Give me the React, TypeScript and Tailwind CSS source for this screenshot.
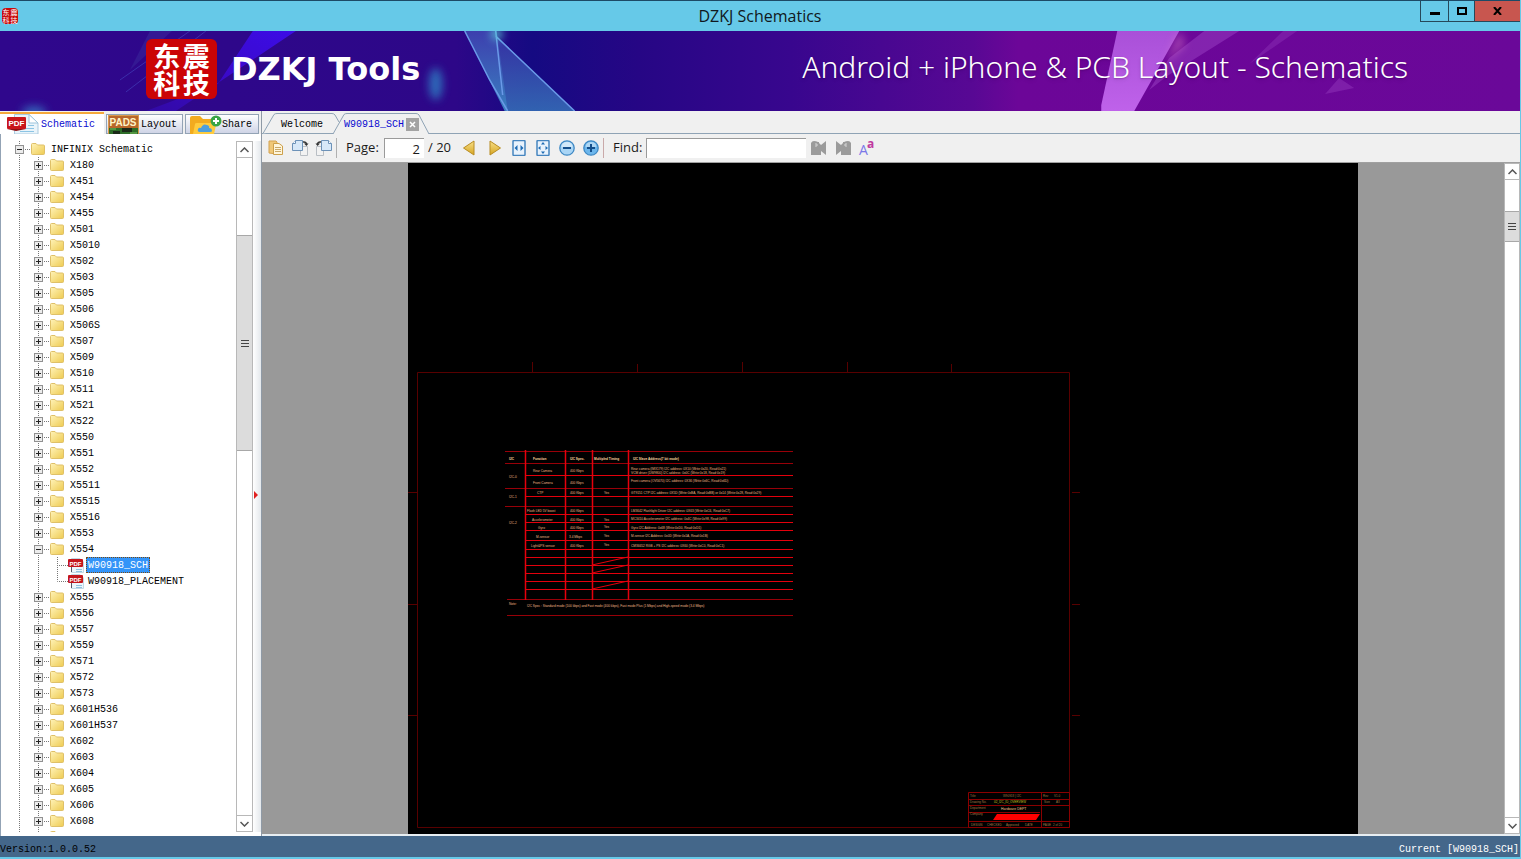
import React, { useState } from "react";
import clsx from "clsx";

const MODELS = [
  "X180", "X451", "X454", "X455", "X501", "X5010", "X502", "X503", "X505",
  "X506", "X506S", "X507", "X509", "X510", "X511", "X521", "X522", "X550",
  "X551", "X552", "X5511", "X5515", "X5516", "X553", "X554", "X555", "X556",
  "X557", "X559", "X571", "X572", "X573", "X601H536", "X601H537", "X602",
  "X603", "X604", "X605", "X606", "X608", "X609",
];

const FILES: Record<string, string[]> = {
  X554: ["W90918_SCH", "W90918_PLACEMENT"],
};

const MONO = "font-['Liberation_Mono','Noto_Sans_CJK_SC',monospace] text-[10px]";

/* ---------- icons ---------- */

const FolderIcon = () => (
  <svg width="14" height="12" viewBox="0 0 14 12" className="shrink-0">
    <defs>
      <linearGradient id="folder" x1="0" y1="0" x2="1" y2="1">
        <stop offset="0" stopColor="#fff3b8" />
        <stop offset="1" stopColor="#eecb52" />
      </linearGradient>
    </defs>
    <path d="M.5 10.5V1.5Q.5.5 1.5.5H5L6.5 2H12.500Q13.500 2 13.500 3V10.500Q13.500 11.500 12.500 11.500H1.500Q.5 11.500.5 10.500Z" fill="url(#folder)" stroke="#dfc068" />
  </svg>
);

const PdfIcon = () => (
  <svg width="16" height="16" viewBox="0 0 16 16" className="shrink-0">
    <path d="M3.500 1.500H12L15.500 5V15.500H3.500Z" fill="#edf6fb" stroke="#c3d9e6" />
    <path d="M8 12.500H14M8 14.500H14" stroke="#8fc3e0" />
    <path d="M3.500 10V15" stroke="#556" />
    <rect x="0" y="2" width="15" height="8" rx="1" fill="#c4161c" />
    <text x="1.500" y="8.500" fontSize="6" fontWeight="bold" fill="#fff" fontFamily="Liberation Sans, sans-serif">PDF</text>
  </svg>
);

const PdfTabIcon = () => (
  <svg width="32" height="20" viewBox="0 0 32 20" className="shrink-0">
    <path d="M7.500 20V.5H22L31 9V20Z" fill="#e9f4fa" stroke="#a9cbe0" />
    <path d="M22 .5V9H31Z" fill="#fff" stroke="#9cc4dc" />
    <path d="M13 14.500H27M13 17.500H27M21 11.500H27" stroke="#8cc4e4" />
    <rect x="0" y="3" width="19" height="12" rx="1" fill="#c9151b" />
    <path d="M0 15H19L9 17Z" fill="#8d0f12" />
    <text x="1.500" y="12" fontSize="8" fontWeight="bold" fill="#fff" fontFamily="Liberation Sans, sans-serif">PDF</text>
  </svg>
);

const PadsIcon = () => (
  <svg width="31" height="19" viewBox="0 0 31 19" className="shrink-0">
    <rect width="31" height="19" fill="#b8662a" />
    <path d="M0 13H31V19H0Z" fill="#2d6d28" />
    <path d="M5 16H12V19H5ZM14 13H24V17H14Z" fill="#1b2a18" />
    <path d="M2 14H8M22 18H29" stroke="#7cc05c" />
    <rect x=".5" y=".5" width="30" height="19" fill="none" stroke="#d99a4a" />
    <text x="1.500" y="11" fontSize="10" fontWeight="bold" fill="#fff4c8" fontFamily="Liberation Sans, sans-serif">PADS</text>
  </svg>
);

const ShareIcon = () => (
  <svg width="32" height="19" viewBox="0 0 32 19" className="shrink-0">
    <path d="M0 19V3Q0 1 2 1H10L13 4H22Q24 4 24 6V19Z" fill="#f2ab1f" />
    <path d="M3 19L5 9Q5 8 7 8H25Q27 8 26 10L24 19Z" fill="#ffcb3d" />
    <path d="M10 17Q7 17 8 14Q9 12 11 13Q13 8 17 10Q20 11 19 13Q22 13 22 16Q22 17 20 17Z" fill="#4f9fdc" />
    <circle cx="26" cy="6" r="5.500" fill="#3aa545" />
    <path d="M26 3V9M23 6H29" stroke="#fff" strokeWidth="2" />
  </svg>
);

const CopyPageIcon = () => (
  <svg width="16" height="16" viewBox="0 0 16 16">
    <path d="M1 1H8L9 2V14L1 13Z" fill="#f0c878" stroke="#d3a250" />
    <path d="M5.500 3.500H11L14.500 6V14.500H5.500Z" fill="#fff6dc" stroke="#cda04b" />
    <path d="M7 7.500H13M7 9.500H13M7 11.500H13" stroke="#c9a96a" />
  </svg>
);

const RotateIcon = ({ left }: { left?: boolean }) => (
  <svg width="18" height="16" viewBox="0 0 18 16">
    <g transform={left ? "translate(18 0) scale(-1 1)" : undefined}>
      <path d="M9.500 6.500H16.500V15.500H9.500Z" fill="#f2f2f2" stroke="#b9bec4" />
      <path d="M4.500.5H11.500V10.500H1.500V3.500Z" fill="#d7e8f8" stroke="#6d92b8" />
      <path d="M4.500.5V3.500H1.500" fill="#fff" stroke="#6d92b8" />
      <path d="M12 2Q15 1.500 15.500 4" fill="none" stroke="#333" strokeWidth="1.500" />
      <path d="M13 3.500H17.500L15.500 6Z" fill="#333" />
    </g>
  </svg>
);

const ArrowIcon = ({ right }: { right?: boolean }) => (
  <svg width="14" height="16" viewBox="0 0 14 16">
    <defs>
      <linearGradient id="gold" x1="0" y1="0" x2="0" y2="1">
        <stop offset="0" stopColor="#f8e08a" />
        <stop offset="1" stopColor="#d6a521" />
      </linearGradient>
    </defs>
    <path d={right ? "M2 1L12.500 8L2 15Z" : "M12 1L1.500 8L12 15Z"} fill="url(#gold)" stroke="#b88c22" strokeLinejoin="round" />
  </svg>
);

const FitIcon = ({ page }: { page?: boolean }) => (
  <svg width="14" height="16" viewBox="0 0 14 16">
    <rect x="1" y=".5" width="12" height="15" rx="1" fill="#e8f2fc" stroke="#4585bf" strokeWidth="1.500" />
    <path d="M5.500 5V11L2.500 8ZM8.500 5V11L11.500 8Z" fill={page ? "none" : "#1f6db5"} />
    {page && (
      <path d="M7 2L9 4.500H5ZM7 14L9 11.500H5ZM2 8L4.500 6V10ZM12 8L9.500 6V10Z" fill="#1f6db5" />
    )}
  </svg>
);

const ZoomIcon = ({ plus }: { plus?: boolean }) => (
  <svg width="16" height="16" viewBox="0 0 16 16">
    <circle cx="8" cy="8" r="7.200" fill={plus ? "#6cb6ec" : "#a9d5f5"} stroke="#3d88c4" strokeWidth="1.300" />
    <path d="M2.500 7Q3 2 8 2T13.500 7Z" fill="#fff" opacity=".45" />
    <path d={plus ? "M4 8H12M8 4V12" : "M4 8H12"} stroke="#134f8c" strokeWidth="2" />
  </svg>
);

const FindIcon = ({ next }: { next?: boolean }) => (
  <svg width="16" height="16" viewBox="0 0 16 16">
    <g transform={next ? "translate(16 0) scale(-1 1)" : undefined}>
      <path d="M0 3Q1 1 3 1T7 2H8V3L10 5L15 1V15L10 11V15H0Z" fill="#9b9b9b" />
      <path d="M4 4H6V6H4" fill="none" stroke="#d5d5d5" />
    </g>
  </svg>
);

const MatchCaseIcon = () => (
  <svg width="18" height="20" viewBox="0 0 18 20">
    <text x="1" y="17" fontSize="14" fill="#7b78e8" fontFamily="Open Sans, sans-serif">A</text>
    <text x="9" y="10" fontSize="12" fontWeight="bold" fill="#c0399f" fontFamily="Open Sans, sans-serif">a</text>
  </svg>
);

const Chevron = ({ up }: { up?: boolean }) => (
  <svg width="9" height="6" viewBox="0 0 9 6">
    <path d={up ? "M.5 5L4.500 1L8.500 5" : "M.5 1L4.500 5L8.500 1"} fill="none" stroke="#555" strokeWidth="1.500" />
  </svg>
);

/* ---------- window chrome ---------- */

const TitleBar = () => (
  <header className="relative flex h-[31px] shrink-0 items-center border-t border-[#1d4a66] bg-[#66c9e8] px-0.5">
    <div className="-mr-4 grid size-4 grid-cols-2 place-items-center rounded-sm bg-[#c80a0c] font-['Noto_Sans_CJK_SC',sans-serif] text-[7px] leading-[8px] text-white">
      <span>东</span>
      <span>震</span>
      <span>科</span>
      <span>技</span>
    </div>
    <h1 className="flex-1 text-center font-['Open_Sans',sans-serif] text-base text-[#101820]">
      DZKJ Schematics
    </h1>
    <div className="absolute top-0 right-0 flex h-[21px] border-b border-l border-[#26485a]">
      <button aria-label="Minimize" className="flex w-7 items-center justify-center border-r border-[#26485a]">
        <span className="mt-1 h-[3px] w-2.5 bg-black" />
      </button>
      <button aria-label="Maximize" className="flex w-[26px] items-center justify-center border-r border-[#26485a]">
        <span className="h-2 w-2.5 border-2 border-black" />
      </button>
      <button aria-label="Close" className="flex w-[45px] items-center justify-center bg-[#c8564f]">
        <svg width="9" height="8" viewBox="0 0 9 8">
          <path d="M1 0L8 8M8 0L1 8" stroke="#000" strokeWidth="2" />
        </svg>
      </button>
    </div>
  </header>
);

const BannerArt = () => (
  <svg viewBox="0 31 1521 80" preserveAspectRatio="none" className="absolute inset-0 h-full w-full">
    <defs>
      <linearGradient id="bg">
        <stop offset="0" stopColor="#2f078c" />
        <stop offset=".3" stopColor="#2d0788" />
        <stop offset=".35" stopColor="#150a82" />
        <stop offset=".42" stopColor="#260685" />
        <stop offset=".52" stopColor="#38068e" />
        <stop offset=".64" stopColor="#580894" />
        <stop offset=".67" stopColor="#6c0698" />
        <stop offset="1" stopColor="#6a0899" />
      </linearGradient>
      <linearGradient id="beam" x1="1" y1="0" x2="0" y2="1">
        <stop offset="0" stopColor="#3c0ce6" />
        <stop offset=".5" stopColor="#3a0acb" />
        <stop offset="1" stopColor="#320aa4" />
      </linearGradient>
      <linearGradient id="glass" x1="0" y1="0" x2="0" y2="1">
        <stop offset="0" stopColor="#3d3fae" />
        <stop offset="1" stopColor="#3a7fc0" />
      </linearGradient>
      <linearGradient id="pink" x1="0" y1="0" x2="0" y2="1">
        <stop offset="0" stopColor="#a950d8" />
        <stop offset="1" stopColor="#bf62ea" />
      </linearGradient>
      <filter id="soft" x="-1" y="-1" width="3" height="3">
        <feGaussianBlur stdDeviation="4" />
      </filter>
    </defs>
    <rect y="31" width="1521" height="80" fill="url(#bg)" />
    <path d="M253 31H296L176 111H146L218 84Z" fill="url(#beam)" />
    <path d="M206 31L126 92M120 80L190 31" stroke="#4548c0" strokeWidth="1" opacity=".6" />
    <path d="M150 31H172L130 70Z" fill="#3a2a9c" opacity=".5" />
    <ellipse cx="436" cy="84" rx="7" ry="16" fill="#2e80c4" opacity=".8" filter="url(#soft)" />
    <ellipse cx="34" cy="112" rx="12" ry="6" fill="#3560b8" filter="url(#soft)" />
    <path d="M465 31H497L508 111H505Z" fill="url(#glass)" />
    <path d="M497 36L575 111H508L503 95Z" fill="url(#glass)" opacity=".75" />
    <path d="M465 31L490 80L508 111M496 31L503 95M496 36L575 111" fill="none" stroke="#6a9ae8" strokeWidth="1.500" />
    <circle cx="497" cy="34" r="6" fill="#58d0d8" opacity=".8" filter="url(#soft)" />
    <path d="M1118 31H1180L1135 111H1102V105Z" fill="url(#pink)" />
    <path d="M1205 31H1240L1168 76L1150 90L1170 58Z" fill="#8d30b8" opacity=".7" />
    <path d="M1284 31H1298L1250 64Z" fill="#8a2eb4" opacity=".5" />
    <path d="M1340 78L1355 88L1326 94Z" fill="#8a2eb4" opacity=".6" />
    <path d="M1180 31L1166 64L1186 44Z" fill="#e080c8" opacity=".5" filter="url(#soft)" />
  </svg>
);

const Banner = () => (
  <div className="relative h-20 shrink-0 overflow-hidden text-white">
    <BannerArt />
    <div className="relative flex h-full items-center pr-28 pb-1 pl-[146px]">
      <div className="mr-3.5 grid h-[60px] w-[71px] shrink-0 grid-cols-2 content-center justify-items-center rounded-md bg-[#cb0406] px-1.5 font-['Noto_Sans_CJK_SC',sans-serif] text-[27px] leading-[27px] font-bold">
        <span>东</span>
        <span>震</span>
        <span>科</span>
        <span>技</span>
      </div>
      <span className="whitespace-nowrap font-['DejaVu_Sans',sans-serif] text-[32px] leading-none font-bold">
        DZKJ Tools
      </span>
      <span className="ml-auto whitespace-nowrap pb-1 font-['Noto_Sans','Open_Sans',sans-serif] text-[30px] leading-none font-light text-shadow-md">
        Android + iPhone &amp; PCB Layout - Schematics
      </span>
    </div>
  </div>
);

/* ---------- scrollbar ---------- */

interface ScrollBarProps {
  before: number;
  thumb: number;
  after: number;
  className: string;
}

const ScrollBar: React.FC<ScrollBarProps> = ({ before, thumb, after, className }) => (
  <div className={clsx("flex shrink-0 flex-col border border-[#b8b8b8] bg-white", className)}>
    <button aria-label="Scroll up" className="flex h-4 items-center justify-center border-b border-[#b8b8b8]">
      <Chevron up />
    </button>
    <div className="flex flex-1 flex-col">
      <div style={{ flexGrow: before }} />
      <div className="flex basis-0 items-center justify-center border-y border-[#a8a8a8] bg-[#dcdcdc]" style={{ flexGrow: thumb }}>
        <svg width="8" height="8" viewBox="0 0 8 8">
          <path d="M0 1.500H8M0 4.500H8M0 7.500H8" stroke="#444" />
        </svg>
      </div>
      <div style={{ flexGrow: after }} />
    </div>
    <button aria-label="Scroll down" className="flex h-4 items-center justify-center border-t border-[#b8b8b8]">
      <Chevron />
    </button>
  </div>
);

/* ---------- sidebar ---------- */

const Dots = ({ d }: { d: string }) => (
  <path d={d} stroke="#777" strokeDasharray="1 1" fill="none" />
);

const Guide = () => (
  <svg width="19" height="16" className="shrink-0">
    <Dots d="M9.500 0V16" />
  </svg>
);

interface ExpanderProps {
  name: string;
  open: boolean;
  onToggle: () => void;
}

const Expander: React.FC<ExpanderProps> = ({ name, open, onToggle }) => (
  <button
    aria-label={open ? `Collapse ${name}` : `Expand ${name}`}
    onClick={onToggle}
    className="h-4 w-[21px] shrink-0"
  >
    <svg width="21" height="16">
      <Dots d="M9.500 0V16" />
      <Dots d="M9 8.500H21" />
      <rect x="5.500" y="4.500" width="8" height="8" fill="#ececec" stroke="#919191" />
      <path d={open ? "M7 8.500H12" : "M7 8.500H12M9.500 6V11"} stroke="#222" />
    </svg>
  </button>
);

interface SidebarProps {
  selected: string;
  onSelect: (file: string) => void;
}

const Sidebar: React.FC<SidebarProps> = ({ selected, onSelect }) => {
  const [rootOpen, setRootOpen] = useState(true);
  const [open, setOpen] = useState<string[]>(["X554"]);

  const toggle = (model: string) =>
    setOpen((prev) =>
      prev.includes(model) ? prev.filter((m) => m !== model) : [...prev, model]
    );

  return (
    <aside className="flex w-[262px] shrink-0 flex-col border-r border-[#8f9aa6]">
      <div className={clsx("flex h-[23px] shrink-0 items-end gap-0.5 pt-px", MONO)}>
        <button className="flex h-full w-[104px] items-center gap-0.5 border-t-2 border-[#f5a83a] bg-white pl-[7px] text-[#0a0ad0]">
          <PdfTabIcon />
          Schematic
        </button>
        <button className="flex h-5 w-[77px] items-center gap-0.5 border border-[#93a3b5] bg-linear-to-b from-white to-[#cfd4e6] pl-px">
          <PadsIcon />
          Layout
        </button>
        <button className="flex h-5 w-[74px] items-center border border-[#93a3b5] bg-linear-to-b from-white to-[#cfd4e6] pl-1">
          <ShareIcon />
          Share
        </button>
      </div>

      <div className="flex min-h-0 flex-1 border-l border-[#93a3b5] bg-white pt-[7px] pb-1">
        <ul className={clsx("min-w-0 flex-1 overflow-hidden pl-[9px] leading-4", MONO)}>
          <li className="flex h-4 items-center whitespace-pre">
            <Expander name="INFINIX Schematic" open={rootOpen} onToggle={() => setRootOpen(!rootOpen)} />
            <FolderIcon />
            <span className="ml-1.5 pt-0.5">INFINIX Schematic</span>
          </li>
          {rootOpen &&
            MODELS.map((model) => (
              <React.Fragment key={model}>
                <li className="flex h-4 items-center">
                  <Guide />
                  <Expander name={model} open={open.includes(model)} onToggle={() => toggle(model)} />
                  <FolderIcon />
                  <span className="ml-1.5 pt-0.5">{model}</span>
                </li>
                {open.includes(model) &&
                  (FILES[model] ?? []).map((file, i, all) => (
                    <li key={file} className="flex h-4 items-center">
                      <Guide />
                      <Guide />
                      <svg width="20" height="16" className="shrink-0">
                        <Dots d={i === all.length - 1 ? "M9.500 0V8.500H20" : "M9.500 0V16M9 8.500H20"} />
                      </svg>
                      <PdfIcon />
                      <button
                        onClick={() => onSelect(file)}
                        className={clsx(
                          "ml-0.5 h-4 border px-px leading-4",
                          file === selected
                            ? "border-dotted border-[#7a4a12] bg-[#3394f8] text-white"
                            : "border-transparent"
                        )}
                      >
                        {file}
                      </button>
                    </li>
                  ))}
              </React.Fragment>
            ))}
        </ul>
        <ScrollBar className="w-[17px]" before={77} thumb={214} after={364} />
        <div className="flex w-2 shrink-0 items-center bg-linear-to-r from-white to-[#e4e8ec]">
          <svg width="6" height="10" viewBox="0 0 6 10" className="mt-4">
            <path d="M1 1L5 5L1 9Z" fill="#e02020" />
          </svg>
        </div>
      </div>
    </aside>
  );
};

/* ---------- document area ---------- */

const DocTabs = ({ file }: { file: string }) => (
  <nav className={clsx("relative flex h-[23px] shrink-0 items-stretch bg-[#f0f0f0]", MONO)}>
    <svg className="absolute inset-0 h-full w-full">
      <path d="M0 22.500H3000" stroke="#8fa3b5" />
      <path d="M1 22.500L12 3.500Q13 2.500 15 2.500H70Q72 2.500 73 4L77 11" fill="#f0f0f0" stroke="#8fa3b5" />
      <path d="M71 23L82 3.500Q83 2.500 85 2.500H154Q156 2.500 157 4L167 23" fill="#f0f0f0" stroke="#8fa3b5" />
    </svg>
    <button className="relative pt-1 pl-[19px]">Welcome</button>
    <button className="relative pt-1 pl-[21px] text-[#0a0ad0]">{file}</button>
    <button aria-label="Close tab" className="relative mt-[7px] ml-0.5 flex h-[13px] w-[13px] items-center justify-center bg-[#a3a3a3]">
      <svg width="7" height="7" viewBox="0 0 7 7">
        <path d="M1 1L6 6M6 1L1 6" stroke="#fff" strokeWidth="1.500" />
      </svg>
    </button>
  </nav>
);

const ToolButton = ({ label, children }: { label: string; children: React.ReactNode }) => (
  <button aria-label={label} className="flex h-6 w-6 shrink-0 items-center justify-center">
    {children}
  </button>
);

const Toolbar = () => {
  const [page, setPage] = useState("2");
  const [query, setQuery] = useState("");

  return (
    <div className="flex h-[29px] shrink-0 items-center border-b border-[#a0a0a0] bg-[#f0f0f0] pl-0.5 font-['Open_Sans',sans-serif] text-[13px] text-[#1a1a1a]">
      <ToolButton label="Copy page"><CopyPageIcon /></ToolButton>
      <ToolButton label="Rotate right"><RotateIcon /></ToolButton>
      <ToolButton label="Rotate left"><RotateIcon left /></ToolButton>
      <span className="h-5 w-px bg-[#b0b0b0]" />
      <label htmlFor="page" className="ml-[9px] w-[38px] shrink-0">Page:</label>
      <input
        id="page"
        value={page}
        onChange={(e) => setPage(e.target.value)}
        className="h-5 w-10 border-t border-l border-[#9a9a9a] bg-white pr-1 text-right leading-none outline-none"
      />
      <span className="ml-1 w-[29px] shrink-0 whitespace-nowrap">/ 20</span>
      <div className="flex gap-0.5">
        <ToolButton label="Previous page"><ArrowIcon /></ToolButton>
        <ToolButton label="Next page"><ArrowIcon right /></ToolButton>
      </div>
      <ToolButton label="Fit width"><FitIcon /></ToolButton>
      <ToolButton label="Fit page"><FitIcon page /></ToolButton>
      <ToolButton label="Zoom out"><ZoomIcon /></ToolButton>
      <ToolButton label="Zoom in"><ZoomIcon plus /></ToolButton>
      <span className="h-5 w-px bg-[#c9a9a9]" />
      <label htmlFor="find" className="ml-[9px] w-[33px] shrink-0">Find:</label>
      <input
        id="find"
        value={query}
        onChange={(e) => setQuery(e.target.value)}
        className="h-5 w-40 border-t border-l border-[#9a9a9a] bg-white px-1 outline-none"
      />
      <div className="ml-px flex">
        <ToolButton label="Find previous"><FindIcon /></ToolButton>
        <ToolButton label="Find next"><FindIcon next /></ToolButton>
        <ToolButton label="Match case"><MatchCaseIcon /></ToolButton>
      </div>
    </div>
  );
};

type Cell = [number, number, string];

const BUS_HEAD: Cell[] = [
  [509, 460, "I2C"], [533, 460, "Function"], [570, 460, "I2C Spec."],
  [594, 460, "Multipled Timing"], [633, 460, "I2C Slave Address(7 bit mode)"],
];

const BUS_TEXT: Cell[] = [
  [533, 472, "Rear Camera"], [570, 472, "400 Kbps"], [631, 470, "Rear camera (IMX179) I2C address: 0X10 (Write:0x20, Read:0x21)"],
  [631, 474, "VCM driver (DW9800) I2C address: 0x0C (Write:0x18, Read:0x19)"],
  [509, 478, "I2C-0"], [533, 484, "Front Camera"], [570, 484, "400 Kbps"], [631, 482, "Front camera (OV5670) I2C address: 0X36 (Write:0x6C, Read:0x6D)"],
  [537, 494, "CTP"], [570, 494, "400 Kbps"], [604, 494, "Yes"], [631, 494, "GT9151 CTP I2C address: 0X5D (Write:0xBA, Read:0xBB) or 0x14 (Write:0x28, Read:0x29)"],
  [509, 498, "I2C-1"], [527, 512, "Flash LED 5V boost"], [570, 512, "400 Kbps"], [631, 512, "LM3642 Flashlight Driver I2C address: 0X63 (Write:0xC6, Read:0xC7)"],
  [532, 521, "Accelerometer"], [570, 521, "400 Kbps"], [604, 521, "Yes"], [631, 520, "MC3410 Accelerometer I2C address: 0x4C (Write:0x98, Read:0x99)"],
  [509, 524, "I2C-2"], [538, 529, "Gyro"], [570, 529, "400 Kbps"], [604, 528, "Yes"], [631, 529, "Gyro I2C Address: 0x68 (Write:0xD0, Read:0xD1)"],
  [536, 538, "M-sensor"], [569, 538, "3.4 Mbps"], [604, 537, "Yes"], [631, 537, "M-sensor I2C Address: 0x0D (Write:0x1A, Read:0x1B)"],
  [531, 547, "Light&PS sensor"], [570, 547, "400 Kbps"], [604, 546, "Yes"], [631, 547, "CM36652 RGB + PS I2C address: 0X60 (Write:0xC0, Read:0xC1)"],
  [509, 605, "Note:"], [527, 607, "I2C Spec : Standard mode (100 kbps) and Fast mode (400 kbps), Fast mode Plus (1 Mbps) and High-speed mode (3.4 Mbps)"],
];

const STAMP_TEXT: Cell[] = [
  [970, 797, "Title"], [1003, 797, "W90918 | I2C"], [1043, 797, "Rev"], [1054, 797, "V1.0"],
  [970, 803, "Drawing No."], [1044, 803, "Size"], [1056, 803, "A3"],
  [970, 809, "Department"], [970, 815, "Company"],
  [971, 826, "DESIGN"], [987, 826, "CHECKED"], [1006, 826, "Approved"], [1025, 826, "DATE"], [1043, 826, "PAGE"], [1053, 826, "2 of 20"],
];

const Labels = ({ cells }: { cells: Cell[] }) => (
  <>
    {cells.map(([x, y, text]) => (
      <text key={`${x}-${y}`} x={x} y={y}>{text}</text>
    ))}
  </>
);

const Schematic = () => (
  <svg width="950" height="671" viewBox="408 163 950 671" className="shrink-0 bg-black" fontFamily="Liberation Sans, sans-serif">
    {/* sheet frame */}
    <g stroke="#580000" fill="none">
      <path d="M417.500 372.500H1069.500V827.500H417.500Z" />
      <path d="M532.500 362V372M637.500 364V372M742.500 362V372M847.500 362V372M951.500 364V372M1072 492.500H1080M1072 604.500H1080M1072 715.500H1080M408 492.500H417M408 604.500H417M408 715.500H417" />
    </g>

    {/* bus table */}
    <g stroke="#980008" fill="none">
      <path d="M505 451.500H793M505 463.500H793M505 488.500H793M505 506.500H793M507 599.500H793M507 615.500H793" />
    </g>
    <g stroke="#e4000c" fill="none">
      <path d="M525.500 450V600M565.500 450V600M592.500 450V600M628.500 450V600" strokeWidth="1.500" />
      <path d="M525 475.500H793M525 496.500H793M525 514.500H793M525 522.500H793M525 530.500H793M525 540.500H793M525 549.500H793M525 557.500H793M525 565.500H793M525 573.500H793M525 581.500H793M525 589.500H793" />
      <path d="M592 565L628 557M592 573L628 565M592 589L628 581" />
    </g>
    <g fill="#ffd8a0" fontSize="3.200" fontWeight="bold">
      <Labels cells={BUS_HEAD} />
    </g>
    <g fill="#f0b888" fontSize="3.200">
      <Labels cells={BUS_TEXT} />
    </g>

    {/* title block */}
    <g stroke="#8a0000" fill="none">
      <path d="M968.500 792.500H1069.500V827.500H968.500ZM968 799.500H1069M968 805.500H1069M968 812.500H1040M968 821.500H1069M1041.500 792V827" />
    </g>
    <path d="M997 814H1040L1036 820H993Z" fill="#f00" />
    <g fill="#a07848" fontSize="3">
      <Labels cells={STAMP_TEXT} />
    </g>
    <text x="994" y="803" fontSize="3" fill="#c8c020">02_I2C_ID_OVERVIEW</text>
    <text x="1001" y="810" fontSize="3.500" fill="#f0c890">Hardware DEPT</text>
  </svg>
);

export default function App() {
  const [file, setFile] = useState("W90918_SCH");

  return (
    <div className="flex h-screen flex-col overflow-hidden border-r border-b-2 border-[#66c9e8] bg-[#f0f0f0] text-black">
      <TitleBar />
      <Banner />
      <div className="flex min-h-0 flex-1">
        <Sidebar selected={file} onSelect={setFile} />
        <main className="flex min-w-0 flex-1 flex-col">
          <DocTabs file={file} />
          <Toolbar />
          <div className="flex min-h-0 flex-1 border-b-2 border-[#e8eef2]">
            <div className="flex min-w-0 flex-1 justify-center overflow-hidden bg-[#999]">
              <Schematic />
            </div>
            <ScrollBar className="w-4" before={31} thumb={29} after={580} />
          </div>
        </main>
      </div>
      <footer className={clsx("flex h-[21px] shrink-0 items-center justify-between bg-[#44678a] pt-1.5 pr-px", MONO)}>
        <span>Version:1.0.0.52</span>
        <span className="text-white">Current [{file}]</span>
      </footer>
    </div>
  );
}
